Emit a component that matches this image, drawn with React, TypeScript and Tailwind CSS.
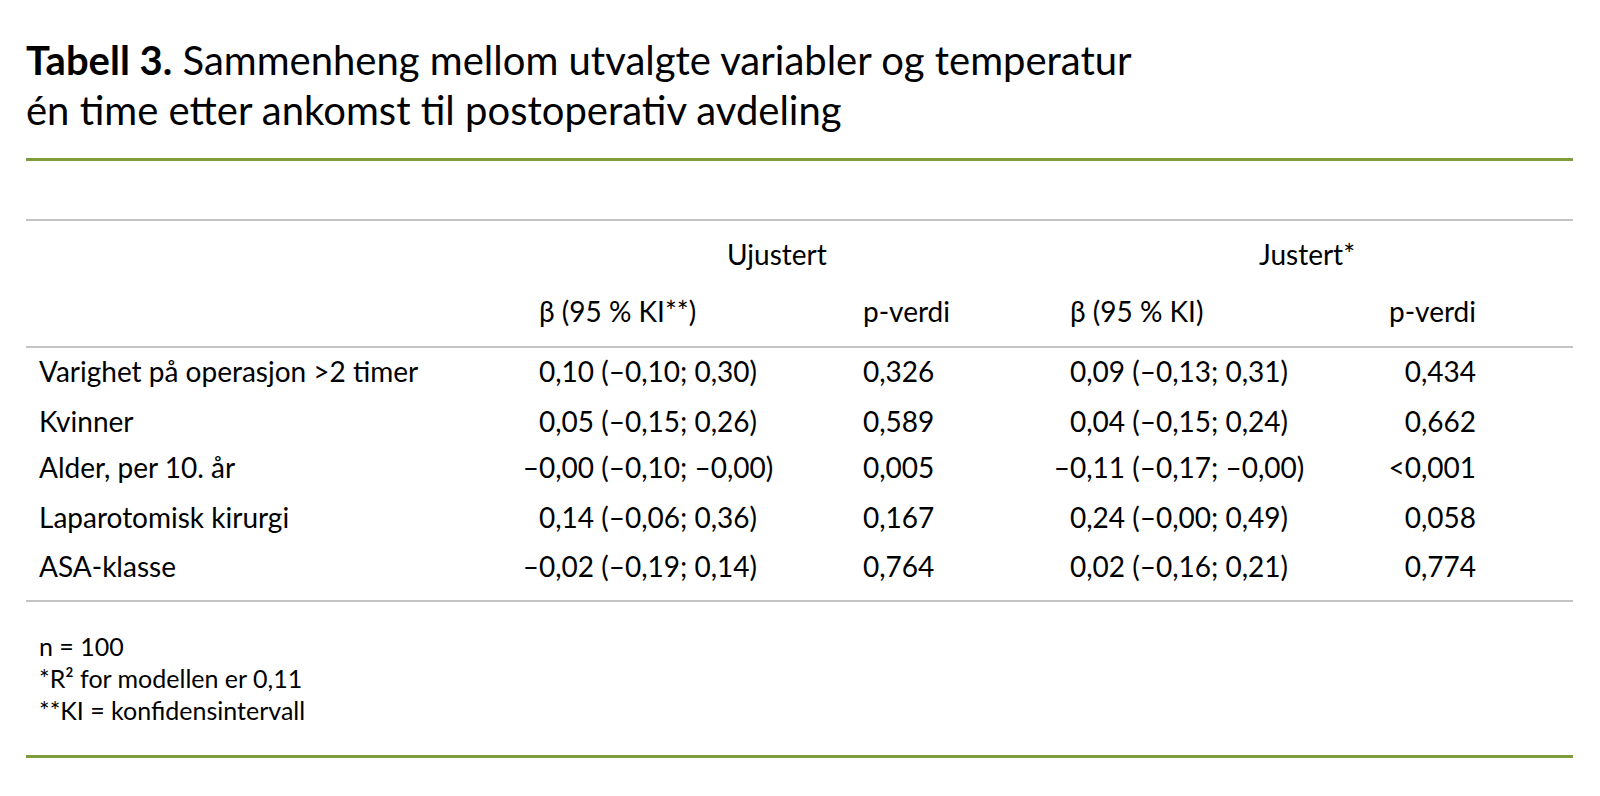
import React from "react";

type Row = {
  label: string;
  s1: string;
  e1: string;
  p1: string;
  s2: string;
  e2: string;
  p2: string;
  pad: string;
};

const rows: Row[] = [
  { label: "Varighet på operasjon >2 timer", s1: "", e1: "0,10 (–0,10; 0,30)", p1: "0,326", s2: "", e2: "0,09 (–0,13; 0,31)", p2: "0,434", pad: "pt-[6px]" },
  { label: "Kvinner", s1: "", e1: "0,05 (–0,15; 0,26)", p1: "0,589", s2: "", e2: "0,04 (–0,15; 0,24)", p2: "0,662", pad: "pt-[16px]" },
  { label: "Alder, per 10. år", s1: "–", e1: "0,00 (–0,10; –0,00)", p1: "0,005", s2: "–", e2: "0,11 (–0,17; –0,00)", p2: "<0,001", pad: "pt-[12px]" },
  { label: "Laparotomisk kirurgi", s1: "", e1: "0,14 (–0,06; 0,36)", p1: "0,167", s2: "", e2: "0,24 (–0,00; 0,49)", p2: "0,058", pad: "pt-[16px]" },
  { label: "ASA-klasse", s1: "–", e1: "0,02 (–0,19; 0,14)", p1: "0,764", s2: "", e2: "0,02 (–0,16; 0,21)", p2: "0,774", pad: "pt-[15px]" },
];

const grid = "grid grid-cols-[496px_341px_190px_247px_176px_1fr]";

export default function App() {
  return (
    <div
      className="w-[1600px] min-h-[796px] bg-white text-black pl-[26px] pr-[27px] pt-[35px]"
      style={{ fontFamily: "Lato, 'Open Sans', sans-serif" }}
    >
      <h1 className="text-[40px] leading-[50px] font-normal">
        <span className="font-bold">Tabell 3.</span> Sammenheng mellom utvalgte variabler og temperatur
        <br />
        én time etter ankomst til postoperativ avdeling
      </h1>

      <div className="mt-[23px] h-[3px] bg-[#7f9c3c]" />

      <div className="mt-[58px] h-[2px] bg-[#c4c4c4]" />

      <div className="text-[28px] leading-[34px]">
        {/* header row 1 */}
        <div className={`${grid} pt-[16px]`}>
          <div />
          <div className="col-span-2 pl-[205px]">Ujustert</div>
          <div className="col-span-2 pl-[206px]">Justert*</div>
          <div />
        </div>
        {/* header row 2 */}
        <div className={`${grid} pt-[23px] pb-[18px]`}>
          <div />
          <div className="pl-[17px]">β (95 % KI**)</div>
          <div>p-verdi</div>
          <div className="pl-[17px]">β (95 % KI)</div>
          <div className="text-right">p-verdi</div>
          <div />
        </div>
        <div className="h-[2px] bg-[#c4c4c4]" />

        {rows.map((r) => (
          <div key={r.label} className={`${grid} ${r.pad}`}>
            <div className="pl-[13px]">{r.label}</div>
            <div className="whitespace-nowrap">
              <span className="inline-block w-[17px] text-right">{r.s1}</span>
              {r.e1}
            </div>
            <div>{r.p1}</div>
            <div className="whitespace-nowrap">
              <span className="inline-block w-[17px] text-right">{r.s2}</span>
              {r.e2}
            </div>
            <div className="text-right">{r.p2}</div>
            <div />
          </div>
        ))}

        <div className="mt-[17px] h-[2px] bg-[#c4c4c4]" />
      </div>

      <div className="pt-[28px] pl-[13px] text-[25px] leading-[32px]">
        <div>n = 100</div>
        <div>*R² for modellen er 0,11</div>
        <div>**KI = konfidensintervall</div>
      </div>

      <div className="mt-[29px] h-[3px] bg-[#7f9c3c]" />
    </div>
  );
}
